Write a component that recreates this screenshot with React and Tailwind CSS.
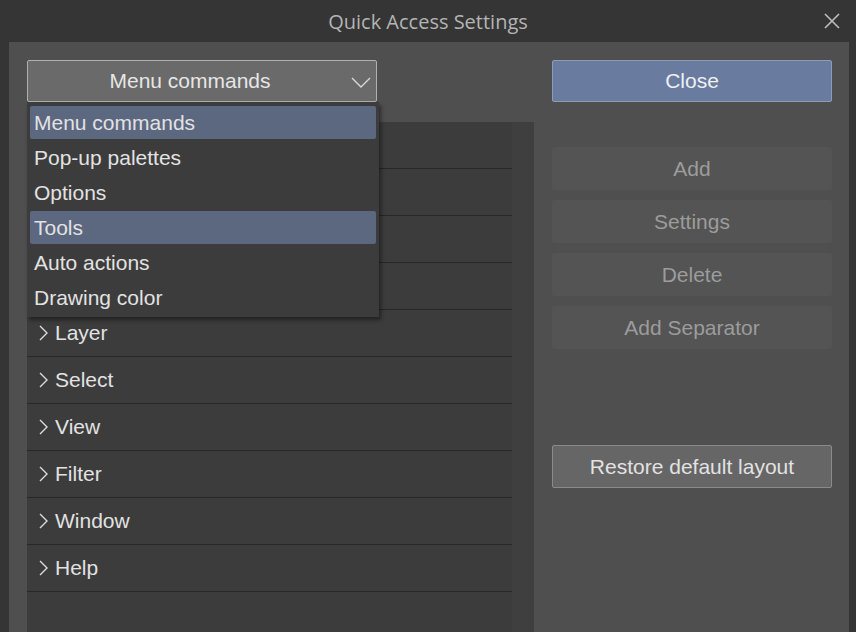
import React from "react";

const rows = ["", "", "", "", "Layer", "Select", "View", "Filter", "Window", "Help"];
const menu = [
  { t: "Menu commands", sel: true },
  { t: "Pop-up palettes" },
  { t: "Options" },
  { t: "Tools", sel: true },
  { t: "Auto actions" },
  { t: "Drawing color" },
];

function Chevron() {
  return (
    <svg width="12" height="18" viewBox="0 0 12 18" className="shrink-0">
      <polyline points="3,2 10,9 3,16" fill="none" stroke="#dcdcdc" strokeWidth="1.4" />
    </svg>
  );
}

export default function App() {
  return (
    <div
      className="w-[856px] h-[632px] bg-[#353535] flex flex-col overflow-hidden"
      style={{ fontFamily: '"Liberation Sans", Arial, sans-serif' }}
    >
      <div className="h-[42px] shrink-0 grid grid-cols-[1fr_auto_1fr] items-center">
        <div />
        <div
          className="text-[20px] text-[#b4b4b4] pt-[1px]"
          style={{ fontFamily: '"Open Sans", "Noto Sans", sans-serif' }}
        >
          Quick Access Settings
        </div>
        <div className="flex justify-end pr-[15px]">
          <svg width="18" height="18" viewBox="0 0 18 18">
            <path d="M2 2 L16 16 M16 2 L2 16" stroke="#bdbdbd" strokeWidth="1.6" fill="none" />
          </svg>
        </div>
      </div>
      <div className="flex-1 flex pl-[9px] pr-[7px]">
        <div className="flex-1 bg-[#4f4f4f] flex pl-[18px] pr-[17px] pt-[18px] gap-[18px]">
          <div className="w-[507px] flex flex-col relative">
            <div className="h-[42px] rounded-[2px] border border-[#b0b0b0] bg-[#6a6a6a] flex items-center justify-center pr-[24px] relative w-[350px]">
              <span className="text-[21px] text-[#e6e6e6]">Menu commands</span>
              <svg width="20" height="11" viewBox="0 0 20 11" className="absolute right-[5px] top-[16px]">
                <polyline points="1,1 10,10 19,1" fill="none" stroke="#d8d8d8" strokeWidth="1.4" />
              </svg>
            </div>
            <div className="mt-[20px] flex-1 bg-[#3c3c3c] flex">
              <div className="w-[485px] flex flex-col">
                {rows.map((r, i) => (
                  <div
                    key={i}
                    className="h-[47px] shrink-0 border-b border-[#272727] flex items-center pl-[10px] gap-[6px] text-[21px] text-[#e2e2e2]"
                  >
                    {r && <Chevron />}
                    {r && <span>{r}</span>}
                  </div>
                ))}
              </div>
              <div className="flex-1 bg-[#3f3f3f]" />
            </div>
            <div className="absolute left-0 top-[42px] w-[352px] h-[215px] bg-[#3c3c3c] shadow-[2px_3px_4px_rgba(0,0,0,0.45)] px-[3px] pt-[4px] flex flex-col">
              {menu.map((m, i) => (
                <div
                  key={i}
                  className={
                    "h-[33px] mb-[2px] shrink-0 flex items-center pl-[4px] text-[21px] text-[#e2e2e2] rounded-[2px] " +
                    (m.sel ? "bg-[#5c6780]" : "")
                  }
                >
                  {m.t}
                </div>
              ))}
            </div>
          </div>
          <div className="w-[280px] flex flex-col">
            <div className="h-[42px] rounded-[2px] border border-[#8d9bb6] bg-[#6a7ba0] flex items-center justify-center text-[21px] text-[#eef0f4]">
              Close
            </div>
            <div className="mt-[45px] flex flex-col gap-[10px]">
              {["Add", "Settings", "Delete", "Add Separator"].map((b) => (
                <div
                  key={b}
                  className="h-[43px] rounded-[3px] bg-[#545454] flex items-center justify-center text-[21px] text-[#9c9c9c]"
                >
                  {b}
                </div>
              ))}
            </div>
            <div className="mt-[96px] h-[43px] rounded-[2px] border border-[#8a8a8a] bg-[#666666] flex items-center justify-center text-[21px] text-[#e2e2e2]">
              Restore default layout
            </div>
          </div>
        </div>
      </div>
    </div>
  );
}
